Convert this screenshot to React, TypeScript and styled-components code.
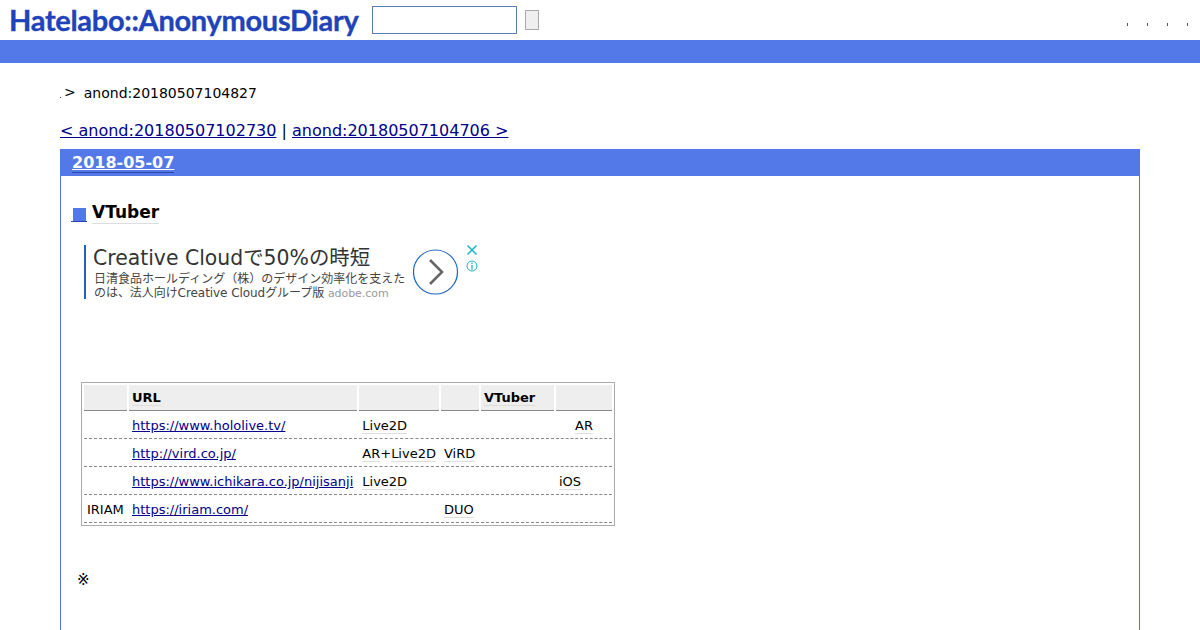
import React from "react";
import styled, { createGlobalStyle } from "styled-components";

const Global = createGlobalStyle`
  html, body { margin: 0; padding: 0; background: #fff; overflow: hidden; }
  body { font-family: "DejaVu Sans", "Noto Sans CJK JP", sans-serif; color: #000; }
`;
const Page = styled.div`width: 1200px; height: 630px; overflow: hidden;`;
const Header = styled.header`
  height: 40px; display: flex; align-items: center; padding-left: 8px; position: relative;
`;
const Logo = styled.div`
  width: 351px; height: 40px; flex: none; padding-left: 1px; box-sizing: border-box;
  font-family: "Lato", "Liberation Sans", sans-serif; font-weight: 700; font-size: 29px;
  letter-spacing: -0.3px;
  line-height: 40px; color: #1f43b8; -webkit-text-stroke: 0.35px #1f43b8; white-space: nowrap;
`;
const Search = styled.input`
  width: 145px; height: 28px; box-sizing: border-box; margin: 0 0 0 13px; padding: 0;
  border: 1px solid #5a7bb5; background: #fff;
`;
const Go = styled.button`
  width: 14px; height: 20px; box-sizing: border-box; margin: 0 0 0 8px; padding: 0;
  border: 1px solid #a9a9a9; background: #efefef;
`;
const Dots = styled.div`
  margin-left: auto; display: flex; gap: 19px; padding: 8px 12px 0 0;
`;
const Dot = styled.span`width: 1px; height: 3px; background: #555;`;
const Bar = styled.div`height: 23px; background: #5279e7;`;
const Crumb = styled.div`
  margin: 22px 0 0 60px; height: 17px; display: flex; align-items: center;
  font-size: 14px; line-height: 17px;
`;
const CrumbDot = styled.span`width: 1px; height: 1px; background: #444; margin: 8px 3px 0 0;`;
const CrumbArrow = styled.span`margin-right: 8px; position: relative; top: -1px;`;
const Pager = styled.div`
  margin: 19px 0 0 60px; height: 20px; font-size: 16px; line-height: 20px;
`;
const Link = styled.a`color: #00008b; text-decoration: underline;`;
const Section = styled.section`
  margin: 8px 60px 0; height: 600px; box-sizing: border-box;
  border: 1px solid #5a76c4; border-top: 0;
`;
const DateBar = styled.div`
  margin: 0 -1px; height: 27px; background: #5279e7; padding-left: 12px;
  font-size: 16px; font-weight: 700; line-height: 27px; color: #fff;
`;
const DateLink = styled.a`
  color: #fff; text-decoration: underline; border-bottom: 1px solid #2d45b0; padding-bottom: 0;
`;
const Title = styled.h3`
  margin: 27px 0 0 10px; height: 20px; display: flex; align-items: center; gap: 5px;
  font-size: 17px; line-height: 20px; font-weight: 700;
`;
const Square = styled.span`
  width: 16px; height: 14px; box-sizing: border-box; margin-top: 3px;
  background: linear-gradient(#5279e7, #5279e7) 2px 0 / 13px 13px no-repeat;
  border-bottom: 1px solid #2d45b0;
`;
const TitleText = styled.span`border-bottom: 1px solid #ddd; line-height: 21px;`;
const Ad = styled.div`
  margin: 22px 0 0 23px; width: 394px; height: 54px; display: flex; position: relative;
  border-left: 2px solid #1f62bd; box-sizing: border-box; padding-left: 7px;
`;
const AdText = styled.div`width: 318px; flex: none;`;
const AdHead = styled.div`font-size: 20.4px; line-height: 27px; color: #333; white-space: nowrap;`;
const AdLine = styled.div<{ $tight?: boolean }>`
  font-size: 12px; line-height: 14px; height: 14px; color: #444; white-space: nowrap; margin-left: 1px;
  letter-spacing: ${(p) => (p.$tight ? "-0.06px" : "0")};
`;
const AdHost = styled.span`color: #999; font-size: 11px;`;
const AdArrow = styled.svg`width: 46px; height: 46px; margin: 4px 0 0 2px; flex: none;`;
const AdIcons = styled.svg`position: absolute; left: 379px; top: -1px; width: 14px; height: 30px;`;
const Table = styled.table`
  margin: 83px 0 0 20px; border: 1px solid #aaa; border-collapse: separate; border-spacing: 2px;
  font-size: 13px;
`;
const Th = styled.th<{ $w?: number }>`
  height: 25px; padding: 0 3px; text-align: left; background: #eee;
  border-bottom: 1px solid #888; font-size: 13px; line-height: 17px;
  ${(p) => (p.$w ? `width: ${p.$w}px;` : "")}
`;
const Td = styled.td<{ $center?: boolean; $wide?: boolean }>`
  height: 25px; padding: 0 ${(p) => (p.$wide ? "4px" : "3px")} 0 3px;
  border-bottom: 1px dashed #888; line-height: 17px;
  text-align: ${(p) => (p.$center ? "center" : "left")}; white-space: nowrap;
`;
const Tag = styled.span`border-bottom: 1px solid #ddd;`;
const Note = styled.p`margin: 46px 0 0 16px; font-size: 15px; line-height: 17px;`;

type Row = [string, string, string, string, string, string];
const rows: Row[] = [
  ["", "https://www.hololive.tv/", "Live2D", "", "", "AR"],
  ["", "http://vird.co.jp/", "AR+Live2D", "ViRD", "", ""],
  ["", "https://www.ichikara.co.jp/nijisanji", "Live2D", "", "", "iOS"],
  ["IRIAM", "https://iriam.com/", "", "DUO", "", ""],
];

export default function App() {
  return (
    <Page>
      <Global />
      <Header>
        <Logo>Hatelabo::AnonymousDiary</Logo>
        <Search aria-label="search" />
        <Go aria-label="go" />
        <Dots><Dot /><Dot /><Dot /><Dot /></Dots>
      </Header>
      <Bar />
      <Crumb>
        <CrumbDot />
        <CrumbArrow>&gt;</CrumbArrow>
        anond:20180507104827
      </Crumb>
      <Pager>
        <Link href="#">&lt; anond:20180507102730</Link> | <Link href="#">anond:20180507104706 &gt;</Link>
      </Pager>
      <Section>
        <DateBar><DateLink href="#">2018-05-07</DateLink></DateBar>
        <Title><Square /><TitleText>VTuber</TitleText></Title>
        <Ad>
          <AdText>
            <AdHead>Creative Cloudで50%の時短</AdHead>
            <AdLine>日清食品ホールディング（株）のデザイン効率化を支えた</AdLine>
            <AdLine $tight>のは、法人向けCreative Cloudグループ版 <AdHost>adobe.com</AdHost></AdLine>
          </AdText>
          <AdArrow viewBox="0 0 46 46">
            <circle cx="22.5" cy="23" r="22" fill="#fff" stroke="#1f62bd" strokeWidth="1.2" />
            <path d="M17 11 L29 23 L17 35" fill="none" stroke="#666" strokeWidth="2.6" />
          </AdArrow>
          <AdIcons viewBox="0 0 14 30">
            <path d="M2.5 1.5 L11.5 10.5 M11.5 1.5 L2.5 10.5" stroke="#19b5c4" strokeWidth="1.5" fill="none" />
            <circle cx="7" cy="22" r="5" stroke="#19b5c4" strokeWidth="1" fill="none" />
            <path d="M7 21 V25.5 M7 18.7 V20" stroke="#19b5c4" strokeWidth="1.3" fill="none" />
          </AdIcons>
        </Ad>
        <Table>
          <thead>
            <tr>
              <Th $w={37} />
              <Th><Tag>URL</Tag></Th>
              <Th />
              <Th $w={32} />
              <Th $w={67}><Tag>VTuber</Tag></Th>
              <Th $w={50} />
            </tr>
          </thead>
          <tbody>
            {rows.map((r) => (
              <tr key={r[1]}>
                <Td>{r[0]}</Td>
                <Td $wide><Link href="#">{r[1]}</Link></Td>
                <Td>{r[2] && (r[2].includes("+") ? <><Tag>AR</Tag>+<Tag>Live2D</Tag></> : <Tag>{r[2]}</Tag>)}</Td>
                <Td>{r[3] && <Tag>{r[3]}</Tag>}</Td>
                <Td />
                <Td $center={r[5] === "AR"}>{r[5] && <Tag>{r[5]}</Tag>}</Td>
              </tr>
            ))}
          </tbody>
        </Table>
        <Note>※</Note>
      </Section>
    </Page>
  );
}
